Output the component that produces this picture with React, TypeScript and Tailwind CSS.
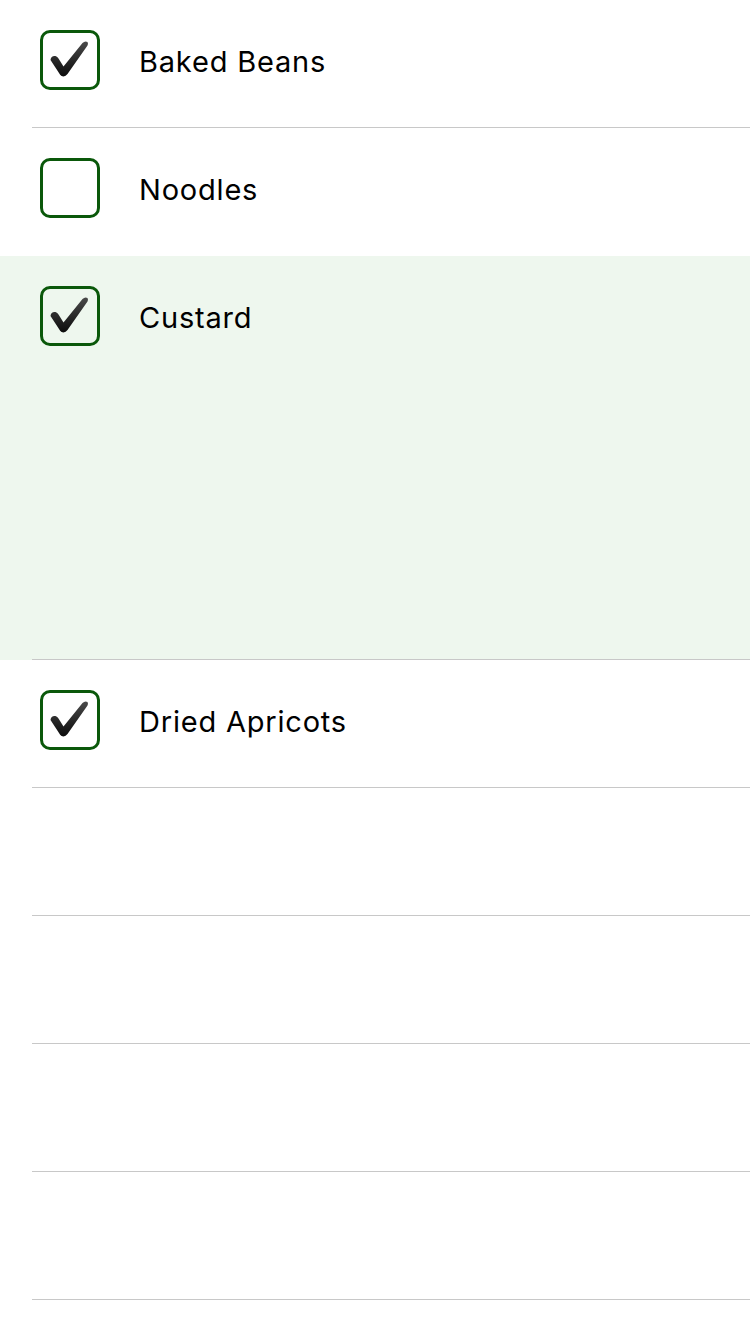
import { useState } from "react"

interface Item {
    name: string
    done: boolean
    open?: boolean
}

const items: Item[] = [
    { name: "Baked Beans", done: true },
    { name: "Noodles", done: false },
    { name: "Custard", done: true, open: true },
    { name: "Dried Apricots", done: true },
]

// tick drawn like the glossy iOS checkmark
function Tick() {
    return (
        <svg width="60" height="60" viewBox="0 0 60 60" className="absolute left-[-3px] top-[-3px]">
            <defs>
                <linearGradient id="tickfill" x1="0" y1="0" x2="0" y2="1">
                    <stop offset="0" stopColor="#4a4a4a" />
                    <stop offset="1" stopColor="#0c0c0c" />
                </linearGradient>
            </defs>
            <path
                d="M10.5 30 Q11 25.5 15.5 26 Q17.5 26.5 18.5 28.5 L23.5 36.5 L42.5 13 Q45 10.5 47.5 12 Q48.5 13.5 47.5 15.5 L27.5 44 Q25 47.5 21.5 46 Q20 45 19 43 Z"
                fill="url(#tickfill)"
            />
        </svg>
    )
}

function CheckBox({ checked, onClick }: { checked: boolean, onClick: () => void }) {
    return (
        <button
            onClick={onClick}
            className="relative w-[60px] h-[60px] shrink-0 rounded-[10px] border-[3px] border-[#0a580a] bg-transparent"
        >
            {checked ? <Tick /> : null}
        </button>
    )
}

function Row({ item, lastBeforeOpen }: { item: Item, lastBeforeOpen?: boolean }) {
    const [done, setDone] = useState(item.done)

    return (
        <div className={item.open ? "bg-[#eef7ee]" : ""}>
            <div className={item.open ? "h-[403px]" : "h-[127px]"}>
                <div className="flex flex-row items-center h-[127px] pl-10 pb-[7px]">
                    <CheckBox checked={done} onClick={() => setDone(!done)} />
                    <span className="ml-[39px] text-[29px] tracking-[0.8px] text-black leading-none pt-[3px]">
                        {item.name}
                    </span>
                </div>
            </div>
            <div className={lastBeforeOpen ? "h-px" : "ml-8 h-px bg-[#c8c8c8]"} />
        </div>
    )
}

export default function App() {
    return (
        <div className="w-[750px] h-[1334px] bg-white overflow-hidden" style={{ fontFamily: 'Inter, "Liberation Sans", sans-serif' }}>
            {items.map((item, i) => (
                <Row key={item.name} item={item} lastBeforeOpen={!!items[i + 1]?.open} />
            ))}
            {[0, 1, 2, 3].map((i) => (
                <div key={i}>
                    <div className="h-[127px]" />
                    <div className="ml-8 h-px bg-[#c8c8c8]" />
                </div>
            ))}
        </div>
    )
}
